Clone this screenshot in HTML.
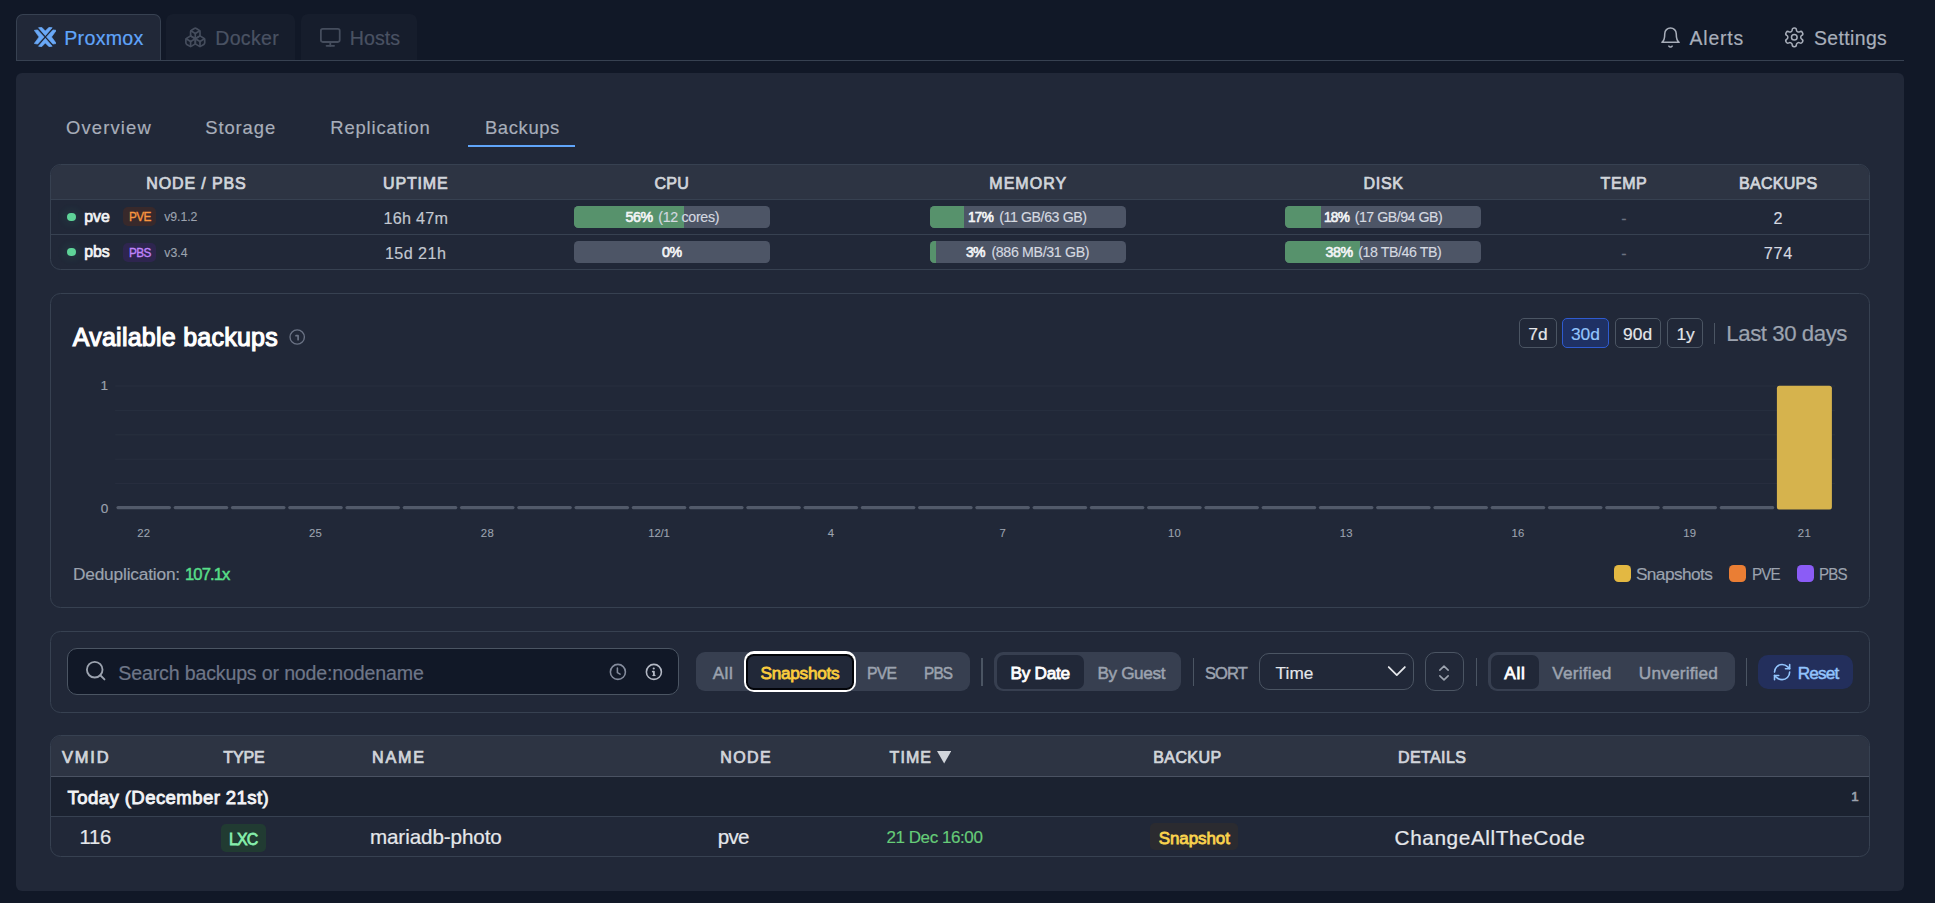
<!DOCTYPE html>
<html lang="en">
<head>
<meta charset="utf-8">
<title>Pulse - Proxmox Backups</title>
<style>
html,body{margin:0;padding:0;background:#111827;}
body{width:1935px;height:903px;position:relative;overflow:hidden;font-family:"Liberation Sans", "DejaVu Sans", sans-serif;}
nav,main,section{display:block;margin:0;padding:0;}
.b{position:absolute;display:block;}
.t{position:absolute;white-space:pre;line-height:1;display:block;}
</style>
</head>
<body>
<nav id="top-nav" aria-label="Platform navigation">
<div class="b" style="left:16px;top:14px;width:145px;height:47px;background:#212838;border:1px solid #374151;border-bottom:none;border-radius:7px 7px 0 0;box-sizing:border-box;"></div>
<div class="b" style="left:165.5px;top:14px;width:129.5px;height:46px;background:#161d2c;border-radius:7px 7px 0 0;"></div>
<div class="b" style="left:301px;top:14px;width:116px;height:46px;background:#161d2c;border-radius:7px 7px 0 0;"></div>
<div class="b" style="left:16px;top:60px;width:1888px;height:1px;background:#374151;"></div>
<svg class="b" style="left:33.8px;top:27.2px" width="22.5" height="19.96" viewBox="228 185 580 515" fill="#6aa9f8" stroke="#6aa9f8" stroke-width="17" stroke-linejoin="round"><polygon points="343,203 425,192 520,288 615,192 697,203 520,408"/><polygon points="343,682 425,693 520,597 615,693 697,682 520,477"/><polygon points="235,272 322,260 488,442 322,625 235,610 358,442"/><polygon points="803,272 716,260 550,442 716,625 803,610 680,442"/></svg>
<svg class="b" style="left:183.95px;top:25.85px" width="22.6" height="22.6" viewBox="0 0 24 24" fill="none" stroke="#454d5d" stroke-width="1.8" stroke-linecap="round" stroke-linejoin="round"><path d="M2.97 12.92A2 2 0 0 0 2 14.63v3.24a2 2 0 0 0 .97 1.71l3 1.8a2 2 0 0 0 2.06 0L12 19v-5.5l-5-3-4.03 2.42Z"/><path d="m7 16.5-4.74-2.85"/><path d="m7 16.5 5-3"/><path d="M7 16.5v5.17"/><path d="M12 13.5V19l3.97 2.38a2 2 0 0 0 2.06 0l3-1.8a2 2 0 0 0 .97-1.71v-3.24a2 2 0 0 0-.97-1.71L17 10.5l-5 3Z"/><path d="m17 16.5-5-3"/><path d="m17 16.5 4.74-2.85"/><path d="M17 16.5v5.17"/><path d="M7.97 4.42A2 2 0 0 0 7 6.13v4.37l5 3 5-3V6.13a2 2 0 0 0-.97-1.71l-3-1.8a2 2 0 0 0-2.06 0l-3 1.8Z"/><path d="M12 8 7.26 5.15"/><path d="m12 8 4.74-2.85"/><path d="M12 13.5V8"/></svg>
<svg class="b" style="left:318.8px;top:25.95px" width="22.6" height="22.6" viewBox="0 0 24 24" fill="none" stroke="#454d5d" stroke-width="1.9" stroke-linecap="round" stroke-linejoin="round"><rect width="20" height="14" x="2" y="3" rx="2"/><line x1="8" x2="16" y1="21" y2="21"/><line x1="12" x2="12" y1="17" y2="21"/></svg>
<svg class="b" style="left:1658.75px;top:25.7px" width="23" height="23" viewBox="0 0 24 24" fill="none" stroke="#a8aeba" stroke-width="1.6" stroke-linecap="round" stroke-linejoin="round"><path d="M6 8a6 6 0 0 1 12 0c0 7 3 9 3 9H3s3-2 3-9"/><path d="M10.3 21a1.94 1.94 0 0 0 3.4 0"/></svg>
<svg class="b" style="left:1782.8px;top:26.2px" width="22.6" height="22.6" viewBox="0 0 24 24" fill="none" stroke="#a8aeba" stroke-width="1.6" stroke-linecap="round" stroke-linejoin="round"><path d="M12.22 2h-.44a2 2 0 0 0-2 2v.18a2 2 0 0 1-1 1.73l-.43.25a2 2 0 0 1-2 0l-.15-.08a2 2 0 0 0-2.73.73l-.22.38a2 2 0 0 0 .73 2.73l.15.1a2 2 0 0 1 1 1.72v.51a2 2 0 0 1-1 1.74l-.15.09a2 2 0 0 0-.73 2.73l.22.38a2 2 0 0 0 2.73.73l.15-.08a2 2 0 0 1 2 0l.43.25a2 2 0 0 1 1 1.73V20a2 2 0 0 0 2 2h.44a2 2 0 0 0 2-2v-.18a2 2 0 0 1 1-1.73l.43-.25a2 2 0 0 1 2 0l.15.08a2 2 0 0 0 2.73-.73l.22-.39a2 2 0 0 0-.73-2.73l-.15-.08a2 2 0 0 1-1-1.74v-.5a2 2 0 0 1 1-1.74l.15-.09a2 2 0 0 0 .73-2.73l-.22-.38a2 2 0 0 0-2.73-.73l-.15.08a2 2 0 0 1-2 0l-.43-.25a2 2 0 0 1-1-1.73V4a2 2 0 0 0-2-2z"/><circle cx="12" cy="12" r="3"/></svg>
<span class="t" style="left:64.22px;top:29.41px;font-size:19.6px;color:#60a5fa;letter-spacing:0.309px;-webkit-text-stroke:0.20px;">Proxmox</span>
<span class="t" style="left:215.22px;top:29.41px;font-size:19.6px;color:#4a5263;letter-spacing:0.298px;-webkit-text-stroke:0.20px;">Docker</span>
<span class="t" style="left:349.72px;top:29.41px;font-size:19.6px;color:#4a5263;letter-spacing:0.069px;-webkit-text-stroke:0.20px;">Hosts</span>
<span class="t" style="left:1689.62px;top:29.38px;font-size:19.4px;color:#a8aeba;letter-spacing:0.795px;-webkit-text-stroke:0.19px;">Alerts</span>
<span class="t" style="left:1814.02px;top:29.38px;font-size:19.4px;color:#a8aeba;letter-spacing:0.382px;-webkit-text-stroke:0.19px;">Settings</span>
</nav>
<main id="proxmox-backups">
<div class="b" style="left:16px;top:73px;width:1888px;height:818px;background:#212838;border-radius:6px;"></div>
<section id="view-tabs" aria-label="Proxmox views">
<div class="b" style="left:468px;top:145px;width:107px;height:2px;background:#60a5fa;"></div>
<span class="t" style="left:65.96px;top:119.22px;font-size:18.4px;color:#a8aeba;letter-spacing:1.159px;-webkit-text-stroke:0.18px;">Overview</span>
<span class="t" style="left:205.26px;top:119.22px;font-size:18.4px;color:#a8aeba;letter-spacing:0.908px;-webkit-text-stroke:0.18px;">Storage</span>
<span class="t" style="left:330.26px;top:119.22px;font-size:18.4px;color:#a8aeba;letter-spacing:0.849px;-webkit-text-stroke:0.18px;">Replication</span>
<span class="t" style="left:484.96px;top:119.22px;font-size:18.4px;color:#a8aeba;letter-spacing:0.638px;-webkit-text-stroke:0.18px;">Backups</span>
</section>
<section id="node-summary" aria-label="Node and PBS summary">
<div class="b" style="left:50px;top:164px;width:1820px;height:106px;box-sizing:border-box;border:1px solid #374151;border-radius:10.5px;overflow:hidden;background:#212838"><div style="height:34px;background:#2d3443;border-bottom:1px solid #374151"></div><div style="height:34px;border-bottom:1px solid #374151"></div></div>
<div class="b" style="left:67.05px;top:212.6px;width:8.8px;height:8.8px;border-radius:50%;background:#5ed398;box-shadow:0 0 9px 3px rgba(52,211,153,.09)"></div>
<div class="b" style="left:67.05px;top:247.6px;width:8.8px;height:8.8px;border-radius:50%;background:#5ed398;box-shadow:0 0 9px 3px rgba(52,211,153,.09)"></div>
<div class="b" style="left:122.9px;top:206.8px;width:33.19999999999999px;height:19.19999999999999px;background:#38292b;border-radius:5px;"></div>
<div class="b" style="left:122.9px;top:242.9px;width:33.19999999999999px;height:19.099999999999994px;background:#2e254f;border-radius:5px;"></div>
<div class="b" style="left:574px;top:206px;width:196px;height:22px;border-radius:4.5px;background:#4d5566;overflow:hidden"><div style="width:110.0px;height:22px;background:#57926c"></div></div>
<div class="b" style="left:930px;top:206px;width:196px;height:22px;border-radius:4.5px;background:#4d5566;overflow:hidden"><div style="width:33.9px;height:22px;background:#57926c"></div></div>
<div class="b" style="left:1285px;top:206px;width:196px;height:22px;border-radius:4.5px;background:#4d5566;overflow:hidden"><div style="width:35.9px;height:22px;background:#57926c"></div></div>
<div class="b" style="left:574px;top:241px;width:196px;height:22px;border-radius:4.5px;background:#4d5566;overflow:hidden"><div style="width:0.0px;height:22px;background:#57926c"></div></div>
<div class="b" style="left:930px;top:241px;width:196px;height:22px;border-radius:4.5px;background:#4d5566;overflow:hidden"><div style="width:6.3px;height:22px;background:#57926c"></div></div>
<div class="b" style="left:1285px;top:241px;width:196px;height:22px;border-radius:4.5px;background:#4d5566;overflow:hidden"><div style="width:75.1px;height:22px;background:#57926c"></div></div>
<span class="t" style="left:146.35px;top:176.25px;font-size:16.0px;color:#d1d5db;letter-spacing:0.870px;-webkit-text-stroke:0.74px;">NODE / PBS</span>
<span class="t" style="left:383.05px;top:176.25px;font-size:16.0px;color:#d1d5db;letter-spacing:0.830px;-webkit-text-stroke:0.74px;">UPTIME</span>
<span class="t" style="left:654.55px;top:176.25px;font-size:16.0px;color:#d1d5db;letter-spacing:0.211px;-webkit-text-stroke:0.74px;">CPU</span>
<span class="t" style="left:989.25px;top:176.25px;font-size:16.0px;color:#d1d5db;letter-spacing:1.057px;-webkit-text-stroke:0.74px;">MEMORY</span>
<span class="t" style="left:1363.55px;top:176.25px;font-size:16.0px;color:#d1d5db;letter-spacing:0.687px;-webkit-text-stroke:0.74px;">DISK</span>
<span class="t" style="left:1600.55px;top:176.25px;font-size:16.0px;color:#d1d5db;letter-spacing:0.584px;-webkit-text-stroke:0.74px;">TEMP</span>
<span class="t" style="left:1739.05px;top:176.25px;font-size:16.0px;color:#d1d5db;letter-spacing:0.256px;-webkit-text-stroke:0.74px;">BACKUPS</span>
<span class="t" style="left:84.35px;top:209.04px;font-size:15.9px;color:#f3f4f6;letter-spacing:-0.113px;-webkit-text-stroke:0.73px;">pve</span>
<span class="t" style="left:129.21px;top:211.35px;font-size:12.7px;color:#f8953f;letter-spacing:-0.699px;transform:scaleX(0.9289);transform-origin:0 0;-webkit-text-stroke:0.36px;">PVE</span>
<span class="t" style="left:164.31px;top:210.69px;font-size:12.3px;color:#9ca3af;letter-spacing:-0.103px;-webkit-text-stroke:0.12px;">v9.1.2</span>
<span class="t" style="left:383.55px;top:209.99px;font-size:16.2px;color:#c3c8d1;letter-spacing:0.233px;-webkit-text-stroke:0.16px;">16h 47m</span>
<span class="t" style="left:625.59px;top:209.98px;font-size:14.2px;color:#f3f4f6;letter-spacing:-0.491px;-webkit-text-stroke:0.65px;">56%</span>
<span class="t" style="left:658.33px;top:209.98px;font-size:14.2px;color:#d5d9e0;letter-spacing:-0.304px;-webkit-text-stroke:0.14px;">(12 cores)</span>
<span class="t" style="left:968.39px;top:209.98px;font-size:14.2px;color:#f3f4f6;letter-spacing:-0.781px;transform:scaleX(0.9583);transform-origin:0 0;-webkit-text-stroke:0.65px;">17%</span>
<span class="t" style="left:999.13px;top:209.98px;font-size:14.2px;color:#d5d9e0;letter-spacing:-0.404px;-webkit-text-stroke:0.14px;">(11 GB/63 GB)</span>
<span class="t" style="left:1323.99px;top:209.98px;font-size:14.2px;color:#f3f4f6;letter-spacing:-0.781px;transform:scaleX(0.9620);transform-origin:0 0;-webkit-text-stroke:0.65px;">18%</span>
<span class="t" style="left:1354.73px;top:209.98px;font-size:14.2px;color:#d5d9e0;letter-spacing:-0.484px;-webkit-text-stroke:0.14px;">(17 GB/94 GB)</span>
<span class="t" style="left:1621.24px;top:211.15px;font-size:16.0px;color:#6b7280;-webkit-text-stroke:0.16px;">-</span>
<span class="t" style="left:1773.54px;top:210.19px;font-size:16.2px;color:#d5d9e0;-webkit-text-stroke:0.16px;">2</span>
<span class="t" style="left:84.35px;top:243.94px;font-size:15.9px;color:#f3f4f6;letter-spacing:-0.113px;-webkit-text-stroke:0.73px;">pbs</span>
<span class="t" style="left:129.21px;top:247.25px;font-size:12.7px;color:#c084fc;letter-spacing:-0.699px;transform:scaleX(0.9289);transform-origin:0 0;-webkit-text-stroke:0.36px;">PBS</span>
<span class="t" style="left:164.31px;top:247.19px;font-size:12.3px;color:#9ca3af;letter-spacing:0.011px;-webkit-text-stroke:0.12px;">v3.4</span>
<span class="t" style="left:384.95px;top:244.99px;font-size:16.2px;color:#c3c8d1;letter-spacing:0.413px;-webkit-text-stroke:0.16px;">15d 21h</span>
<span class="t" style="left:661.99px;top:244.98px;font-size:14.2px;color:#f3f4f6;letter-spacing:-0.491px;-webkit-text-stroke:0.65px;">0%</span>
<span class="t" style="left:966.39px;top:244.98px;font-size:14.2px;color:#f3f4f6;letter-spacing:-0.781px;transform:scaleX(0.9894);transform-origin:0 0;-webkit-text-stroke:0.65px;">3%</span>
<span class="t" style="left:991.43px;top:244.98px;font-size:14.2px;color:#d5d9e0;letter-spacing:-0.337px;-webkit-text-stroke:0.14px;">(886 MB/31 GB)</span>
<span class="t" style="left:1325.59px;top:244.98px;font-size:14.2px;color:#f3f4f6;letter-spacing:-0.491px;-webkit-text-stroke:0.65px;">38%</span>
<span class="t" style="left:1358.23px;top:244.98px;font-size:14.2px;color:#d5d9e0;letter-spacing:-0.430px;-webkit-text-stroke:0.14px;">(18 TB/46 TB)</span>
<span class="t" style="left:1621.24px;top:246.15px;font-size:16.0px;color:#6b7280;-webkit-text-stroke:0.16px;">-</span>
<span class="t" style="left:1763.85px;top:245.19px;font-size:16.2px;color:#d5d9e0;letter-spacing:0.690px;-webkit-text-stroke:0.16px;">774</span>
</section>
<section id="backup-chart" aria-label="Available backups chart">
<div class="b" style="left:50px;top:293px;width:1820px;height:315px;box-sizing:border-box;border:1px solid #374151;border-radius:10.5px;background:#212838"></div>
<div class="b" style="left:1519px;top:318px;width:38px;height:30px;box-sizing:border-box;border:1px solid #4b5563;border-radius:5px;"></div>
<div class="b" style="left:1562px;top:318px;width:47px;height:30px;box-sizing:border-box;border:1px solid #2f5bd0;background:#1f3164;border-radius:5px;"></div>
<div class="b" style="left:1615px;top:318px;width:46px;height:30px;box-sizing:border-box;border:1px solid #4b5563;border-radius:5px;"></div>
<div class="b" style="left:1667px;top:318px;width:36px;height:30px;box-sizing:border-box;border:1px solid #4b5563;border-radius:5px;"></div>
<div class="b" style="left:1714px;top:322.5px;width:1px;height:21.19999999999999px;background:#4b5563;"></div>
<svg class="b" style="left:0;top:0" width="1935" height="903" viewBox="0 0 1935 903"><line x1="115.2" x2="1835" y1="386.0" y2="386.0" stroke="#282f3f" stroke-width="1"/><line x1="115.2" x2="1835" y1="410.4" y2="410.4" stroke="#282f3f" stroke-width="1"/><line x1="115.2" x2="1835" y1="434.8" y2="434.8" stroke="#282f3f" stroke-width="1"/><line x1="115.2" x2="1835" y1="459.2" y2="459.2" stroke="#282f3f" stroke-width="1"/><line x1="115.2" x2="1835" y1="483.6" y2="483.6" stroke="#282f3f" stroke-width="1"/><rect x="116.40" y="506" width="54.6" height="3.2" rx="1.6" fill="#525a6a"/><rect x="173.66" y="506" width="54.6" height="3.2" rx="1.6" fill="#525a6a"/><rect x="230.92" y="506" width="54.6" height="3.2" rx="1.6" fill="#525a6a"/><rect x="288.18" y="506" width="54.6" height="3.2" rx="1.6" fill="#525a6a"/><rect x="345.44" y="506" width="54.6" height="3.2" rx="1.6" fill="#525a6a"/><rect x="402.70" y="506" width="54.6" height="3.2" rx="1.6" fill="#525a6a"/><rect x="459.96" y="506" width="54.6" height="3.2" rx="1.6" fill="#525a6a"/><rect x="517.22" y="506" width="54.6" height="3.2" rx="1.6" fill="#525a6a"/><rect x="574.48" y="506" width="54.6" height="3.2" rx="1.6" fill="#525a6a"/><rect x="631.74" y="506" width="54.6" height="3.2" rx="1.6" fill="#525a6a"/><rect x="689.00" y="506" width="54.6" height="3.2" rx="1.6" fill="#525a6a"/><rect x="746.26" y="506" width="54.6" height="3.2" rx="1.6" fill="#525a6a"/><rect x="803.52" y="506" width="54.6" height="3.2" rx="1.6" fill="#525a6a"/><rect x="860.78" y="506" width="54.6" height="3.2" rx="1.6" fill="#525a6a"/><rect x="918.04" y="506" width="54.6" height="3.2" rx="1.6" fill="#525a6a"/><rect x="975.30" y="506" width="54.6" height="3.2" rx="1.6" fill="#525a6a"/><rect x="1032.56" y="506" width="54.6" height="3.2" rx="1.6" fill="#525a6a"/><rect x="1089.82" y="506" width="54.6" height="3.2" rx="1.6" fill="#525a6a"/><rect x="1147.08" y="506" width="54.6" height="3.2" rx="1.6" fill="#525a6a"/><rect x="1204.34" y="506" width="54.6" height="3.2" rx="1.6" fill="#525a6a"/><rect x="1261.60" y="506" width="54.6" height="3.2" rx="1.6" fill="#525a6a"/><rect x="1318.86" y="506" width="54.6" height="3.2" rx="1.6" fill="#525a6a"/><rect x="1376.12" y="506" width="54.6" height="3.2" rx="1.6" fill="#525a6a"/><rect x="1433.38" y="506" width="54.6" height="3.2" rx="1.6" fill="#525a6a"/><rect x="1490.64" y="506" width="54.6" height="3.2" rx="1.6" fill="#525a6a"/><rect x="1547.90" y="506" width="54.6" height="3.2" rx="1.6" fill="#525a6a"/><rect x="1605.16" y="506" width="54.6" height="3.2" rx="1.6" fill="#525a6a"/><rect x="1662.42" y="506" width="54.6" height="3.2" rx="1.6" fill="#525a6a"/><rect x="1719.68" y="506" width="54.6" height="3.2" rx="1.6" fill="#525a6a"/><rect x="1776.9" y="385.7" width="55" height="123.8" rx="2.5" fill="#d6b34d"/><g fill="none" stroke="#6b7385" stroke-width="1.35" stroke-linecap="round" stroke-linejoin="round"><circle cx="297.2" cy="337" r="7.2"/><path d="M296 335.7h2.1v4" stroke-width="1.7"/></g></svg>
<div class="b" style="left:1614px;top:565px;width:17px;height:17px;background:#e3b842;border-radius:4.5px;"></div>
<div class="b" style="left:1729px;top:565px;width:17px;height:17px;background:#ea7e34;border-radius:4.5px;"></div>
<div class="b" style="left:1797px;top:565px;width:16.5px;height:17px;background:#8b5cf6;border-radius:4.5px;"></div>
<span class="t" style="left:72.75px;top:324.63px;font-size:25.0px;color:#ffffff;letter-spacing:0.246px;-webkit-text-stroke:1.15px;">Available backups</span>
<span class="t" style="left:1528.20px;top:326.47px;font-size:17.4px;color:#e5e7eb;letter-spacing:0.248px;-webkit-text-stroke:0.17px;">7d</span>
<span class="t" style="left:1571.00px;top:326.47px;font-size:17.4px;color:#93c5fd;letter-spacing:-0.062px;-webkit-text-stroke:0.17px;">30d</span>
<span class="t" style="left:1623.00px;top:326.47px;font-size:17.4px;color:#e5e7eb;letter-spacing:0.138px;-webkit-text-stroke:0.17px;">90d</span>
<span class="t" style="left:1676.60px;top:326.47px;font-size:17.4px;color:#e5e7eb;letter-spacing:-0.283px;-webkit-text-stroke:0.17px;">1y</span>
<span class="t" style="left:1726.31px;top:323.41px;font-size:22.2px;color:#9ca3af;letter-spacing:-0.422px;-webkit-text-stroke:0.22px;">Last 30 days</span>
<span class="t" style="left:100.57px;top:378.59px;font-size:13.6px;color:#9ca3af;-webkit-text-stroke:0.14px;">1</span>
<span class="t" style="left:100.72px;top:502.09px;font-size:13.6px;color:#9ca3af;-webkit-text-stroke:0.14px;">0</span>
<span class="t" style="left:137.25px;top:528.43px;font-size:11.3px;color:#9ca3af;letter-spacing:0.326px;-webkit-text-stroke:0.11px;">22</span>
<span class="t" style="left:309.03px;top:528.43px;font-size:11.3px;color:#9ca3af;letter-spacing:0.326px;-webkit-text-stroke:0.11px;">25</span>
<span class="t" style="left:480.81px;top:528.43px;font-size:11.3px;color:#9ca3af;letter-spacing:0.326px;-webkit-text-stroke:0.11px;">28</span>
<span class="t" style="left:648.34px;top:528.43px;font-size:11.3px;color:#9ca3af;letter-spacing:-0.199px;-webkit-text-stroke:0.11px;">12/1</span>
<span class="t" style="left:827.67px;top:528.43px;font-size:11.3px;color:#9ca3af;-webkit-text-stroke:0.11px;">4</span>
<span class="t" style="left:999.45px;top:528.43px;font-size:11.3px;color:#9ca3af;-webkit-text-stroke:0.11px;">7</span>
<span class="t" style="left:1167.93px;top:528.43px;font-size:11.3px;color:#9ca3af;letter-spacing:0.326px;-webkit-text-stroke:0.11px;">10</span>
<span class="t" style="left:1339.71px;top:528.43px;font-size:11.3px;color:#9ca3af;letter-spacing:0.326px;-webkit-text-stroke:0.11px;">13</span>
<span class="t" style="left:1511.49px;top:528.43px;font-size:11.3px;color:#9ca3af;letter-spacing:0.326px;-webkit-text-stroke:0.11px;">16</span>
<span class="t" style="left:1683.27px;top:528.43px;font-size:11.3px;color:#9ca3af;letter-spacing:0.326px;-webkit-text-stroke:0.11px;">19</span>
<span class="t" style="left:1797.79px;top:528.43px;font-size:11.3px;color:#9ca3af;letter-spacing:0.326px;-webkit-text-stroke:0.11px;">21</span>
<span class="t" style="left:72.91px;top:566.35px;font-size:17.3px;color:#9ca3af;letter-spacing:-0.173px;-webkit-text-stroke:0.17px;">Deduplication:</span>
<span class="t" style="left:185.16px;top:566.35px;font-size:17.3px;color:#58de88;letter-spacing:-0.952px;transform:scaleX(0.9605);transform-origin:0 0;-webkit-text-stroke:0.48px;">107.1x</span>
<span class="t" style="left:1635.91px;top:566.35px;font-size:17.3px;color:#9ca3af;letter-spacing:-0.586px;-webkit-text-stroke:0.17px;">Snapshots</span>
<span class="t" style="left:1751.91px;top:566.35px;font-size:17.3px;color:#9ca3af;letter-spacing:-0.952px;transform:scaleX(0.8805);transform-origin:0 0;-webkit-text-stroke:0.17px;">PVE</span>
<span class="t" style="left:1818.81px;top:566.35px;font-size:17.3px;color:#9ca3af;letter-spacing:-0.952px;transform:scaleX(0.8744);transform-origin:0 0;-webkit-text-stroke:0.17px;">PBS</span>
</section>
<section id="backup-filters" aria-label="Backup filters">
<div class="b" style="left:50px;top:631px;width:1820px;height:82px;box-sizing:border-box;border:1px solid #374151;border-radius:10.5px;background:#212838"></div>
<div class="b" style="left:67px;top:648px;width:612px;height:47px;box-sizing:border-box;border:1px solid #4b5563;border-radius:10px;background:#111827;"></div>
<div class="b" style="left:696px;top:652px;width:274px;height:39px;background:#373f50;border-radius:9px;"></div>
<div class="b" style="left:743.6px;top:651.1px;width:112.89999999999998px;height:41.39999999999998px;background:#ffffff;border-radius:10px;"></div>
<div class="b" style="left:746.0px;top:653.5px;width:108.10000000000002px;height:36.60000000000002px;background:#03050a;border-radius:7.6px;"></div>
<div class="b" style="left:748.1px;top:655.6px;width:103.89999999999998px;height:32.39999999999998px;background:#212838;border-radius:5.6px;"></div>
<div class="b" style="left:981.3px;top:658px;width:1.25px;height:28px;background:#4b5563;"></div>
<div class="b" style="left:1192.8px;top:658px;width:1.25px;height:28px;background:#4b5563;"></div>
<div class="b" style="left:1475.5px;top:658px;width:1.25px;height:28px;background:#4b5563;"></div>
<div class="b" style="left:1745.9px;top:658px;width:1.25px;height:28px;background:#4b5563;"></div>
<div class="b" style="left:994px;top:652px;width:187px;height:39px;background:#373f50;border-radius:9px;"></div>
<div class="b" style="left:997px;top:655px;width:87px;height:34px;background:#212838;border-radius:7px;"></div>
<div class="b" style="left:1259px;top:653px;width:155px;height:37px;box-sizing:border-box;border:1px solid #4b5563;border-radius:10px;"></div>
<div class="b" style="left:1425px;top:652px;width:39px;height:39px;box-sizing:border-box;border:1px solid #4b5563;border-radius:10px;"></div>
<div class="b" style="left:1488.4px;top:652px;width:246.5999999999999px;height:39px;background:#373f50;border-radius:9px;"></div>
<div class="b" style="left:1490.8px;top:655px;width:48.200000000000045px;height:34px;background:#212838;border-radius:7px;"></div>
<div class="b" style="left:1758px;top:655px;width:95px;height:34px;background:#232f5c;border-radius:10px;"></div>
<svg class="b" style="left:83.5px;top:659.35px" width="23.4" height="23.4" viewBox="0 0 24 24" fill="none" stroke="#9ca3af" stroke-width="1.9" stroke-linecap="round" stroke-linejoin="round"><circle cx="11" cy="11" r="8"/><path d="m21 21-4.3-4.3"/></svg>
<svg class="b" style="left:608px;top:662px" width="19.8" height="19.8" viewBox="0 0 24 24" fill="none" stroke="#858c9d" stroke-width="1.9" stroke-linecap="round" stroke-linejoin="round"><circle cx="12" cy="12" r="9.1"/><path d="M11.4 7.2v5.6l3.2 1.9"/></svg>
<svg class="b" style="left:643.9px;top:662px" width="19.8" height="19.8" viewBox="0 0 24 24" fill="none" stroke="#b4b9c5" stroke-width="1.9" stroke-linecap="round" stroke-linejoin="round"><circle cx="12" cy="12" r="9.1"/><path d="M10.6 11.6h1.4v4.6" stroke-width="2.2"/><path d="M10.9 16.3h2.4" stroke-width="1.6"/><path d="M11.8 7.9h.01" stroke-width="2.6"/></svg>
<svg class="b" style="left:1383.3px;top:656.3px" width="27.6" height="27.6" viewBox="0 0 24 24" fill="none" stroke="#e5e7eb" stroke-width="1.55" stroke-linecap="round" stroke-linejoin="round"><path d="m5 9.6 7 7 7-7"/></svg>
<svg class="b" style="left:1434.2px;top:662.6px" width="20" height="20" viewBox="0 0 24 24" fill="none" stroke="#9ca3af" stroke-width="1.9" stroke-linecap="round" stroke-linejoin="round"><path d="m7 15.4 5 4.8 5-4.8"/><path d="m7 8.6 5-4.8 5 4.8"/></svg>
<svg class="b" style="left:1771.6px;top:661.65px" width="20.2" height="20.2" viewBox="0 0 24 24" fill="none" stroke="#93c5fd" stroke-width="1.9" stroke-linecap="round" stroke-linejoin="round"><path d="M3 12a9 9 0 0 1 9-9 9.75 9.75 0 0 1 6.74 2.74L21 8"/><path d="M21 3v5h-5"/><path d="M21 12a9 9 0 0 1-9 9 9.75 9.75 0 0 1-6.74-2.74L3 16"/><path d="M8 16H3v5"/></svg>
<span class="t" style="left:118.32px;top:663.91px;font-size:19.6px;color:#6e7688;letter-spacing:-0.166px;-webkit-text-stroke:0.20px;">Search backups or node:nodename</span>
<span class="t" style="left:712.67px;top:664.54px;font-size:17.2px;color:#9ca3af;letter-spacing:0.479px;-webkit-text-stroke:0.48px;">All</span>
<span class="t" style="left:760.62px;top:664.54px;font-size:17.2px;color:#facc3d;letter-spacing:-0.285px;-webkit-text-stroke:0.79px;">Snapshots</span>
<span class="t" style="left:866.77px;top:664.54px;font-size:17.2px;color:#9ca3af;letter-spacing:-0.946px;transform:scaleX(0.9216);transform-origin:0 0;-webkit-text-stroke:0.48px;">PVE</span>
<span class="t" style="left:924.17px;top:664.54px;font-size:17.2px;color:#9ca3af;letter-spacing:-0.946px;transform:scaleX(0.8940);transform-origin:0 0;-webkit-text-stroke:0.48px;">PBS</span>
<span class="t" style="left:1010.62px;top:664.54px;font-size:17.2px;color:#ffffff;letter-spacing:-0.297px;-webkit-text-stroke:0.79px;">By Date</span>
<span class="t" style="left:1097.47px;top:664.54px;font-size:17.2px;color:#9ca3af;letter-spacing:-0.391px;-webkit-text-stroke:0.48px;">By Guest</span>
<span class="t" style="left:1204.97px;top:664.54px;font-size:17.2px;color:#9ca3af;letter-spacing:-0.946px;transform:scaleX(0.9611);transform-origin:0 0;-webkit-text-stroke:0.48px;">SORT</span>
<span class="t" style="left:1275.61px;top:664.54px;font-size:17.2px;color:#e5e7eb;letter-spacing:0.071px;-webkit-text-stroke:0.17px;">Time</span>
<span class="t" style="left:1504.32px;top:664.54px;font-size:17.2px;color:#ffffff;letter-spacing:0.674px;-webkit-text-stroke:0.79px;">All</span>
<span class="t" style="left:1552.27px;top:664.54px;font-size:17.2px;color:#9ca3af;letter-spacing:0.234px;-webkit-text-stroke:0.48px;">Verified</span>
<span class="t" style="left:1638.87px;top:664.54px;font-size:17.2px;color:#9ca3af;letter-spacing:0.186px;-webkit-text-stroke:0.48px;">Unverified</span>
<span class="t" style="left:1797.77px;top:664.54px;font-size:17.2px;color:#93c5fd;letter-spacing:-0.860px;-webkit-text-stroke:0.48px;">Reset</span>
</section>
<section id="backup-table" aria-label="Backups list">
<div class="b" style="left:50px;top:735px;width:1820px;height:122px;box-sizing:border-box;border:1px solid #374151;border-radius:10.5px;overflow:hidden;background:#212838"><div style="height:40px;background:#2d3443;border-bottom:1px solid #4a5262"></div><div style="height:39px;background:#1b2230;border-bottom:1px solid #374151"></div></div>
<div class="b" style="left:221px;top:824.2px;width:44.80000000000001px;height:27.5px;background:#213b32;border-radius:5px;"></div>
<div class="b" style="left:1150.3px;top:822.6px;width:87.60000000000014px;height:27.399999999999977px;background:#2b2b30;border-radius:5px;"></div>
<svg class="b" style="left:937.2px;top:751px" width="14.3" height="12.6" viewBox="0 0 14.3 12.6"><polygon points="0,0 14.3,0 7.15,12.6" fill="#d1d5db"/></svg>
<span class="t" style="left:61.65px;top:750.45px;font-size:16.0px;color:#d1d5db;letter-spacing:1.760px;transform:scaleX(1.0270);transform-origin:0 0;-webkit-text-stroke:0.74px;">VMID</span>
<span class="t" style="left:223.25px;top:750.45px;font-size:16.0px;color:#d1d5db;letter-spacing:-0.131px;-webkit-text-stroke:0.74px;">TYPE</span>
<span class="t" style="left:372.25px;top:750.45px;font-size:16.0px;color:#d1d5db;letter-spacing:1.760px;transform:scaleX(1.0076);transform-origin:0 0;-webkit-text-stroke:0.74px;">NAME</span>
<span class="t" style="left:720.25px;top:750.45px;font-size:16.0px;color:#d1d5db;letter-spacing:1.357px;-webkit-text-stroke:0.74px;">NODE</span>
<span class="t" style="left:889.55px;top:750.45px;font-size:16.0px;color:#d1d5db;letter-spacing:1.062px;-webkit-text-stroke:0.74px;">TIME</span>
<span class="t" style="left:1153.25px;top:750.45px;font-size:16.0px;color:#d1d5db;letter-spacing:0.401px;-webkit-text-stroke:0.74px;">BACKUP</span>
<span class="t" style="left:1398.05px;top:750.45px;font-size:16.0px;color:#d1d5db;letter-spacing:0.384px;-webkit-text-stroke:0.74px;">DETAILS</span>
<span class="t" style="left:67.59px;top:789.45px;font-size:18.6px;color:#f3f4f6;letter-spacing:0.398px;-webkit-text-stroke:0.86px;">Today (December 21st)</span>
<span class="t" style="left:1851.32px;top:789.56px;font-size:13.4px;color:#9ca3af;-webkit-text-stroke:0.62px;">1</span>
<span class="t" style="left:79.39px;top:826.90px;font-size:20.2px;color:#e5e7eb;letter-spacing:-0.186px;-webkit-text-stroke:0.20px;">116</span>
<span class="t" style="left:228.93px;top:831.78px;font-size:16.8px;color:#86efac;letter-spacing:-0.924px;transform:scaleX(0.9491);transform-origin:0 0;-webkit-text-stroke:0.77px;">LXC</span>
<span class="t" style="left:369.88px;top:826.56px;font-size:20.6px;color:#e5e7eb;letter-spacing:-0.071px;-webkit-text-stroke:0.21px;">mariadb-photo</span>
<span class="t" style="left:717.68px;top:826.56px;font-size:20.6px;color:#e5e7eb;letter-spacing:-0.685px;-webkit-text-stroke:0.21px;">pve</span>
<span class="t" style="left:886.42px;top:828.81px;font-size:17.0px;color:#66cc78;letter-spacing:-0.426px;-webkit-text-stroke:0.17px;">21 Dec 16:00</span>
<span class="t" style="left:1158.63px;top:830.11px;font-size:17.0px;color:#fbd34d;letter-spacing:-0.071px;-webkit-text-stroke:0.78px;">Snapshot</span>
<span class="t" style="left:1394.57px;top:827.99px;font-size:20.8px;color:#e5e7eb;letter-spacing:0.582px;-webkit-text-stroke:0.21px;">ChangeAllTheCode</span>
</section>
</main>
</body>
</html>
